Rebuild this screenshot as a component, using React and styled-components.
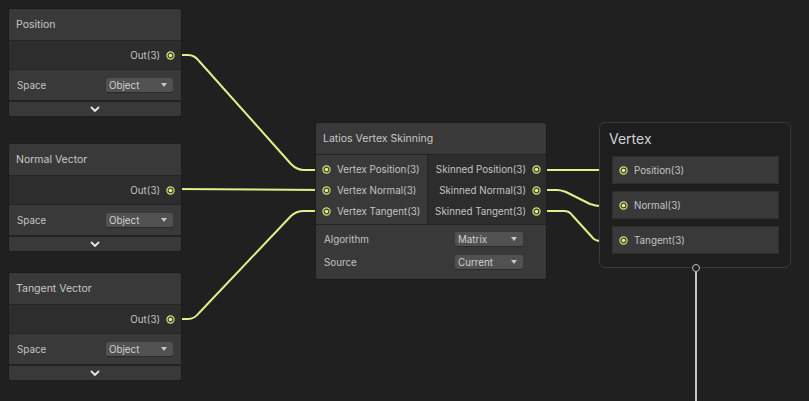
import React from "react";
import styled, { createGlobalStyle } from "styled-components";

const GlobalStyle = createGlobalStyle`
  html, body {
    margin: 0;
    padding: 0;
    background: #202020;
  }
  * { box-sizing: border-box; }
`;

const Canvas = styled.div`
  position: relative;
  width: 809px;
  height: 401px;
  overflow: hidden;
  background: #202020;
  font-family: "Inter", "Noto Sans", sans-serif;
  color: #c4c4c4;
  font-size: 9.8px;
`;

const Wires = styled.svg`
  position: absolute;
  left: 0;
  top: 0;
  pointer-events: none;
`;

const Node = styled.div`
  position: absolute;
  left: ${(p) => p.x}px;
  top: ${(p) => p.y}px;
  width: ${(p) => p.w}px;
  display: flex;
  flex-direction: column;
  gap: 1px;
  background: #232323;
  border-radius: 2px;
  overflow: hidden;
  box-shadow: 0 0 0 1px #1c1c1c;
`;

const Title = styled.div`
  height: 31px;
  display: flex;
  align-items: center;
  padding-left: 7px;
  background: #393939;
  font-size: 10.5px;
  color: #c8c8c8;
`;

const OutRow = styled.div`
  height: 28px;
  display: flex;
  align-items: center;
  justify-content: flex-end;
  gap: 6px;
  padding-right: 6px;
  background: #2d2d2d;
`;

const PropRow = styled.div`
  height: 30px;
  display: flex;
  align-items: center;
  justify-content: space-between;
  padding: 0 8px;
  background: #393939;
`;

const PropLabel = styled.span`
  color: #c4c4c4;
`;

const Dropdown = styled.div`
  width: ${(p) => p.w || 67}px;
  height: 14px;
  display: flex;
  align-items: center;
  justify-content: space-between;
  padding: 0 6px 0 3px;
  background: #515151;
  border-radius: 2px;
  color: #d0d0d0;
  box-shadow: 0 1px 0 #2a2a2a;
`;

const Caret = styled.span`
  width: 0;
  height: 0;
  border-left: 3.5px solid transparent;
  border-right: 3.5px solid transparent;
  border-top: 4px solid #c8c8c8;
`;

const Expander = styled.div`
  height: 14px;
  display: flex;
  align-items: center;
  justify-content: center;
  background: #393939;
  margin-top: 1px;
`;

const Columns = styled.div`
  display: grid;
  grid-template-columns: 111px 1fr;
  gap: 1px;
  height: 69px;
`;

const InputCol = styled.div`
  background: #393939;
  display: flex;
  flex-direction: column;
  padding-top: 4px;
  padding-left: 6px;
`;

const OutputCol = styled.div`
  background: #2d2d2d;
  display: flex;
  flex-direction: column;
  align-items: flex-end;
  padding-top: 4px;
  padding-right: 5px;
`;

const PortRow = styled.div`
  height: 21px;
  display: flex;
  align-items: center;
  gap: 6px;
  white-space: nowrap;
`;

const Settings = styled.div`
  background: #393939;
  display: flex;
  flex-direction: column;
  padding: 7px 23px 6px 8px;
  gap: 9px;
  height: 54px;
`;

const SettingRow = styled.div`
  height: 14px;
  display: flex;
  align-items: center;
  justify-content: space-between;
`;

const Context = styled.div`
  position: absolute;
  left: 599px;
  top: 122px;
  width: 192px;
  height: 146px;
  border: 1px solid #393939;
  border-radius: 6px;
  background: #1e1e1e;
  padding: 4px 11px 0 12px;
  display: flex;
  flex-direction: column;
  gap: 7px;
`;

const ContextTitle = styled.div`
  font-size: 14px;
  color: #d2d2d2;
  height: 22px;
  display: flex;
  align-items: center;
  margin-left: -3px;
`;

const Block = styled.div`
  height: 28px;
  background: #393939;
  border: 1px solid #2e2e2e;
  display: flex;
  align-items: center;
  gap: 6px;
  padding-left: 6px;
`;

const FlowPort = styled.div`
  position: absolute;
  left: 692px;
  top: 264px;
  width: 8px;
  height: 8px;
  border-radius: 50%;
  border: 1.5px solid #bdbdbd;
  background: #202020;
`;

function Port() {
  return (
    <svg width="9" height="9" viewBox="0 0 9 9" style={{ flex: "none" }}>
      <circle cx="4.5" cy="4.5" r="3.6" fill="#3b3f2c" stroke="#d3df78" strokeWidth="1.2" />
      <circle cx="4.5" cy="4.5" r="1.8" fill="#e2ec8e" />
    </svg>
  );
}

function Chevron() {
  return (
    <svg width="10" height="7" viewBox="0 0 10 7">
      <path d="M1.5 1.5 L5 5 L8.5 1.5" fill="none" stroke="#e6e6e6" strokeWidth="1.8" strokeLinecap="round" />
    </svg>
  );
}

function VectorNode({ x, y, title }) {
  return (
    <Node x={x} y={y} w={172}>
      <Title>{title}</Title>
      <OutRow>
        <span>Out(3)</span>
        <Port />
      </OutRow>
      <PropRow>
        <PropLabel>Space</PropLabel>
        <Dropdown>
          <span>Object</span>
          <Caret />
        </Dropdown>
      </PropRow>
      <Expander>
        <Chevron />
      </Expander>
    </Node>
  );
}

const wire = "#e4ee8a";

export default function App() {
  return (
    <Canvas>
      <GlobalStyle />
      <Wires width="809" height="401">
        <g fill="none" stroke={wire} strokeWidth="2" strokeLinejoin="round">
          <path d="M176 55 L188 55 C193 55 196 57 199 61 L291 164 C295 168 298 170 304 170 L322 170" />
          <path d="M176 189 L322 190" />
          <path d="M176 319 L188 319 C193 319 196 317 199 313 L291 216 C295 212 298 211 304 211 L322 211" />
          <path d="M541 170 L617 170" />
          <path d="M541 190 L557 190 C561 190 563 191 566 192 L590 204 C593 205 596 206 600 206 L617 206" />
          <path d="M541 211 L564 211 C568 211 570 212 572 215 L592 237 C594 240 597 241 601 241 L617 241" />
        </g>
        <path d="M696 271 L696 401" stroke="#c6c6c6" strokeWidth="2" fill="none" />
      </Wires>

      <VectorNode x={9} y={9} title="Position" />
      <VectorNode x={9} y={144} title="Normal Vector" />
      <VectorNode x={9} y={273} title="Tangent Vector" />

      <Node x={316} y={123} w={230}>
        <Title>Latios Vertex Skinning</Title>
        <Columns>
          <InputCol>
            <PortRow>
              <Port />
              <span>Vertex Position(3)</span>
            </PortRow>
            <PortRow>
              <Port />
              <span>Vertex Normal(3)</span>
            </PortRow>
            <PortRow>
              <Port />
              <span>Vertex Tangent(3)</span>
            </PortRow>
          </InputCol>
          <OutputCol>
            <PortRow>
              <span>Skinned Position(3)</span>
              <Port />
            </PortRow>
            <PortRow>
              <span>Skinned Normal(3)</span>
              <Port />
            </PortRow>
            <PortRow>
              <span>Skinned Tangent(3)</span>
              <Port />
            </PortRow>
          </OutputCol>
        </Columns>
        <Settings>
          <SettingRow>
            <PropLabel>Algorithm</PropLabel>
            <Dropdown w={68}>
              <span>Matrix</span>
              <Caret />
            </Dropdown>
          </SettingRow>
          <SettingRow>
            <PropLabel>Source</PropLabel>
            <Dropdown w={68}>
              <span>Current</span>
              <Caret />
            </Dropdown>
          </SettingRow>
        </Settings>
      </Node>

      <Context>
        <ContextTitle>Vertex</ContextTitle>
        <Block>
          <Port />
          <span>Position(3)</span>
        </Block>
        <Block>
          <Port />
          <span>Normal(3)</span>
        </Block>
        <Block>
          <Port />
          <span>Tangent(3)</span>
        </Block>
      </Context>
      <FlowPort />
    </Canvas>
  );
}
